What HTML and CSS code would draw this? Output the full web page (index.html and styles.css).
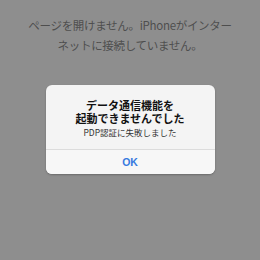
FILE: index.html
```html
<!DOCTYPE html>
<html lang="ja">
<head>
    <meta charset="UTF-8">
    <title>データ通信</title>
    <link rel="stylesheet" href="styles.css">
</head>
<body>
    <div class="screen">
        <p class="page-error">ページを開けません。iPhoneがインター<br>ネットに接続していません。</p>
        <div class="alert">
            <div class="alert-body">
                <div class="alert-title">データ通信機能を<br>起動できませんでした</div>
                <div class="alert-message">PDP認証に失敗しました</div>
            </div>
            <div class="alert-button">OK</div>
        </div>
    </div>
</body>
</html>
```
FILE: styles.css
```css
* {
    margin: 0;
    padding: 0;
    box-sizing: border-box;
}

body {
    font-family: "Noto Sans CJK JP", "Liberation Sans", sans-serif;
    background: #8e8e8e;
}

.screen {
    width: 260px;
    height: 260px;
    display: flex;
    flex-direction: column;
    align-items: center;
}

.page-error {
    margin-top: 15px;
    font-size: 11.5px;
    line-height: 20px;
    color: #4e4e4e;
    text-align: center;
    letter-spacing: -0.3px;
}

.alert {
    margin-top: 30px;
    width: 169px;
    background: #f4f4f4;
    border-radius: 6px;
    box-shadow: 0 1px 2px rgba(0, 0, 0, 0.25);
    overflow: hidden;
}

.alert-body {
    padding: 14px 8px 11px;
    text-align: center;
    border-bottom: 1px solid #dcdcdc;
}

.alert-title {
    font-size: 11px;
    font-weight: bold;
    line-height: 13px;
    color: #111;
}

.alert-message {
    margin-top: 2px;
    font-size: 8.5px;
    line-height: 11px;
    color: #333;
}

.alert-button {
    height: 24px;
    line-height: 24px;
    text-align: center;
    font-family: "Liberation Sans", sans-serif;
    font-size: 10.5px;
    font-weight: bold;
    color: #3579df;
    background: #f7f7f7;
}
```
